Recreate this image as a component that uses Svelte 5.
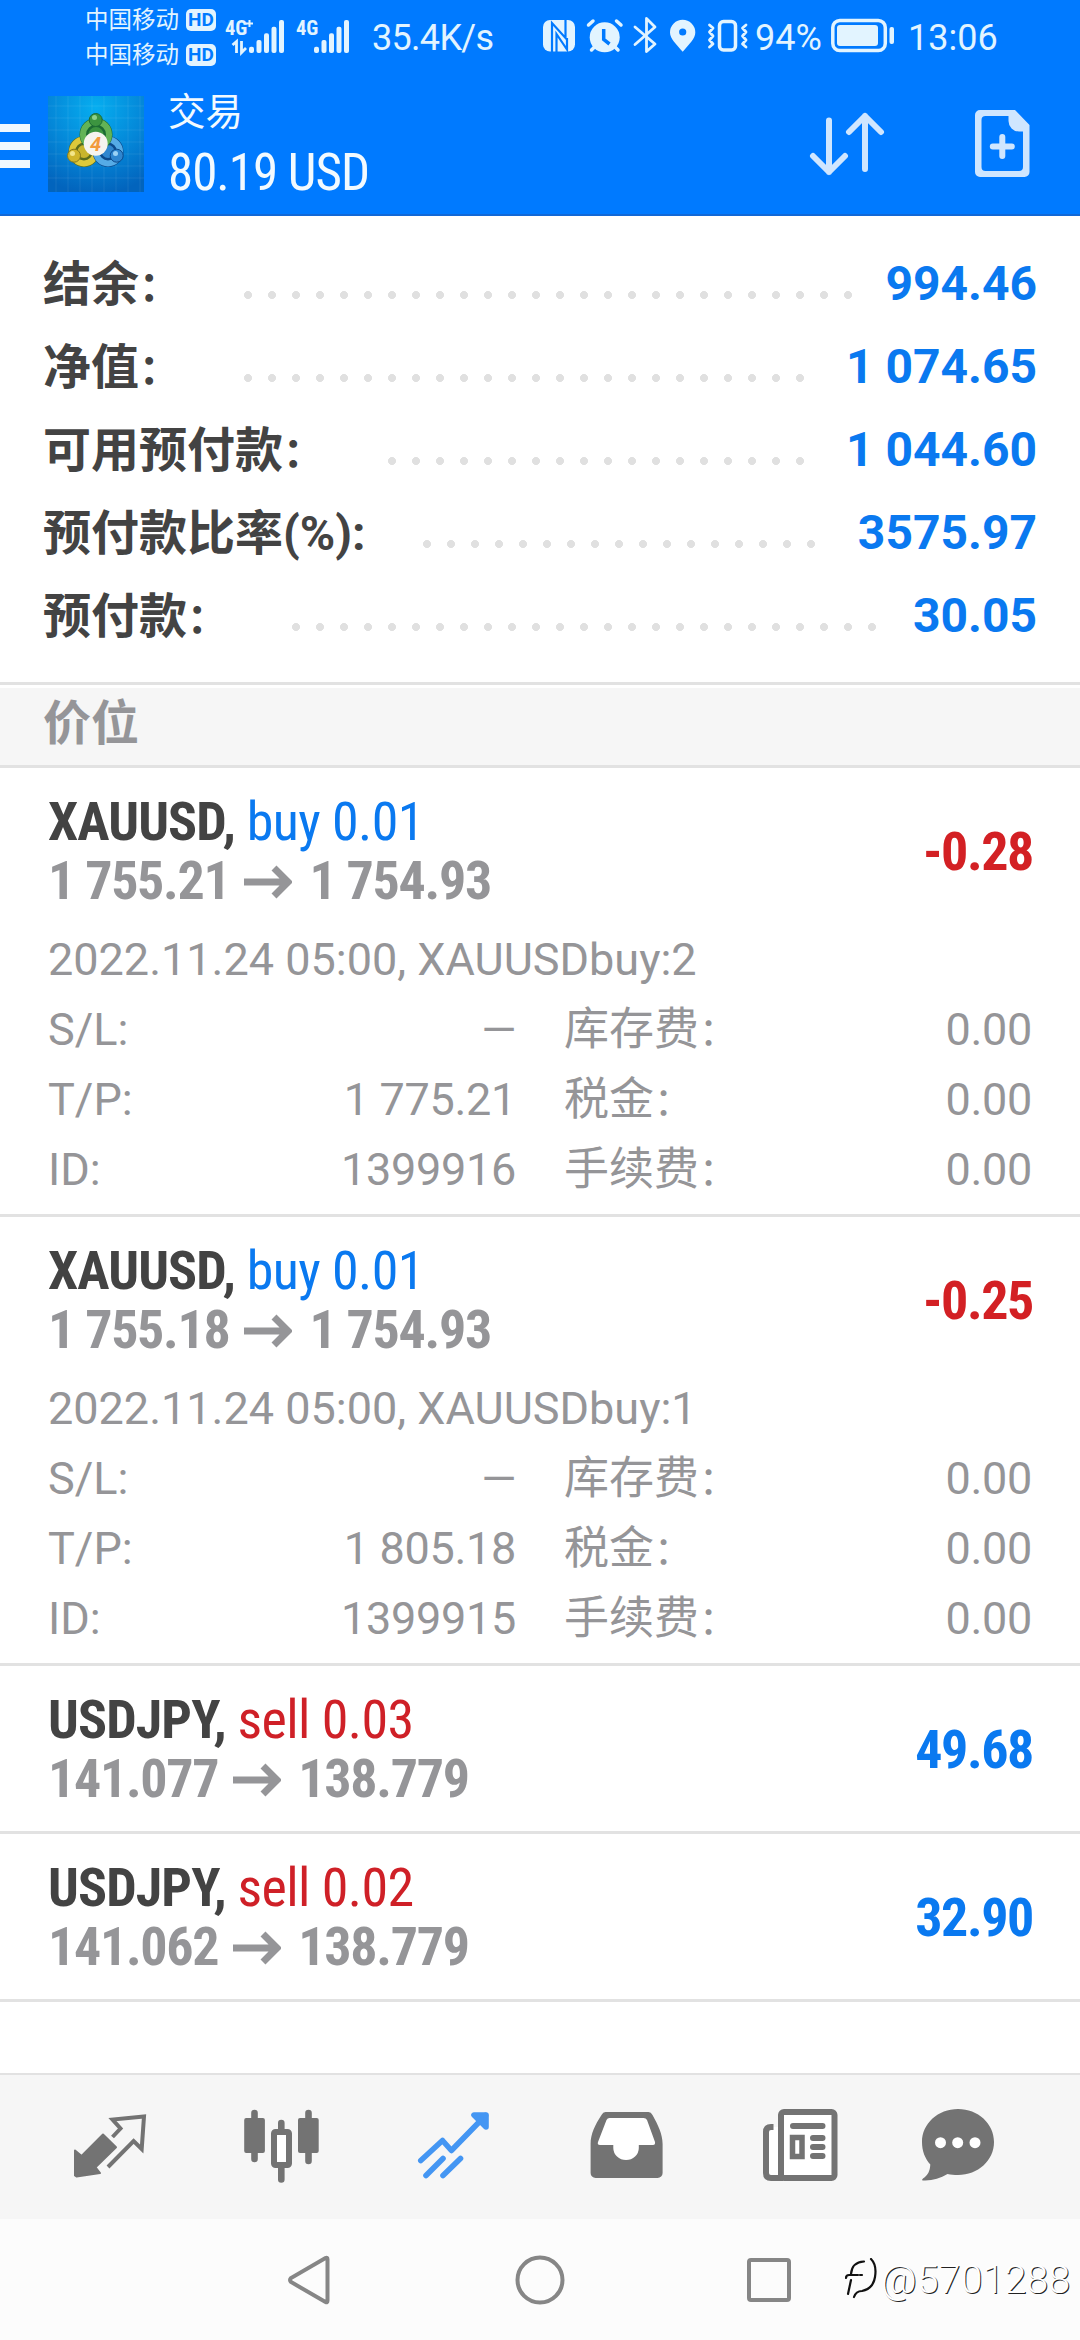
<script>
  const title = "交易"
  const floating = "80.19 USD"

  // dots: how many leader dots are between the label and the value
  const summary = [
    { label: "结余：", value: "994.46", dots: 26 },
    { label: "净值：", value: "1 074.65", dots: 24 },
    { label: "可用预付款：", value: "1 044.60", dots: 18 },
    { label: "预付款比率(%):", value: "3575.97", dots: 17 },
    { label: "预付款：", value: "30.05", dots: 25 },
  ]

  const positions = [
    {
      symbol: "XAUUSD",
      side: "buy",
      volume: "0.01",
      open: "1 755.21",
      price: "1 754.93",
      profit: "-0.28",
      details: {
        comment: "2022.11.24 05:00, XAUUSDbuy:2",
        rows: [
          ["S/L:", "—", "库存费：", "0.00"],
          ["T/P:", "1 775.21", "税金：", "0.00"],
          ["ID:", "1399916", "手续费：", "0.00"],
        ],
      },
    },
    {
      symbol: "XAUUSD",
      side: "buy",
      volume: "0.01",
      open: "1 755.18",
      price: "1 754.93",
      profit: "-0.25",
      details: {
        comment: "2022.11.24 05:00, XAUUSDbuy:1",
        rows: [
          ["S/L:", "—", "库存费：", "0.00"],
          ["T/P:", "1 805.18", "税金：", "0.00"],
          ["ID:", "1399915", "手续费：", "0.00"],
        ],
      },
    },
    {
      symbol: "USDJPY",
      side: "sell",
      volume: "0.03",
      open: "141.077",
      price: "138.779",
      profit: "49.68",
    },
    {
      symbol: "USDJPY",
      side: "sell",
      volume: "0.02",
      open: "141.062",
      price: "138.779",
      profit: "32.90",
    },
  ]

  const bars = [31.7, 25, 18.3, 11.7, 5]
</script>

<!-- the full-width colon is drawn smaller, so that it sits closer to the text -->
{#snippet caption(text)}
  {#if text.endsWith("：")}
    <span>{text.slice(0, -1)}<span class="colon">：</span></span>
  {:else}
    <span>{text}</span>
  {/if}
{/snippet}

<div class="screen">
  <header>
    <div class="status">
      <div class="carriers">
        <div>中国移动<span class="hd">HD</span></div>
        <div>中国移动<span class="hd">HD</span></div>
      </div>
      <svg class="signal" width="128" height="42" viewBox="0 0 128 42">
        <text x="2" y="20">4G</text>
        <path d="M26.5 5v7M23 8.5h7" stroke="currentColor" stroke-width="2" />
        <path d="M9.5 30l4-3.500v11.500M18.500 26v11.500l4.500-4.500" stroke="currentColor" stroke-width="2.800" fill="none" />
        <text x="73" y="20">4G</text>
        {#each bars as top, i}
          <rect x={26 + i * 7.5} y={top} width="5" height={38 - top} rx="2" />
          <rect x={91 + i * 7.5} y={top} width="5" height={38 - top} rx="2" />
        {/each}
      </svg>
      <span class="speed">35.4K/s</span>
      <svg class="indicators" width="210" height="42" viewBox="0 0 210 42">
        <!-- nfc -->
        <rect x="2" y="5" width="32" height="31.500" rx="7" />
        <path class="cut" d="M11 37V8L24.500 23V4.500M15.500 37V19L26 34.500V23" stroke-width="2.200" />
        <!-- alarm -->
        <circle cx="63.700" cy="22.300" r="15" />
        <path class="line" d="M47.500 10l4.500-4M75.500 6l4.500 4M50.500 35l3-3M77 35l-3-3" />
        <path class="cut" d="M62.700 14v10.500l5.800 4.500" stroke-width="3.500" />
        <!-- bluetooth -->
        <path class="line thin" d="M94 12l20 17-8.500 7.500v-33L114 12 94 29.500" />
        <!-- location -->
        <path d="M141.700 36.700C135 29 129 23.500 129 17.500a12.650 12.650 0 1 1 25.300 0c0 6-5.900 11.500-12.600 19.200z" />
        <circle cx="141.700" cy="17" r="3.600" fill="#007aff" />
        <!-- vibration -->
        <rect class="line" x="178.500" y="6.500" width="16" height="28.500" rx="4" />
        <path class="line thin" d="M168.500 10l3.500 3-3.500 4 3.500 4-3.500 4 3.500 4-3.500 3M205 10l-3.500 3 3.500 4-3.500 4 3.500 4-3.500 4 3.500 3" />
      </svg>
      <span class="charge">94%</span>
      <svg class="battery" width="64" height="36" viewBox="0 0 64 36">
        <rect class="line" x="1.800" y="2.500" width="52.500" height="30" rx="7" />
        <rect x="6" y="7" width="41" height="21" rx="3" />
        <rect x="58.500" y="9" width="4.500" height="17" rx="2" />
      </svg>
      <span class="clock">13:06</span>
    </div>

    <div class="app-bar">
      <button type="button" class="menu" aria-label="menu">
        <span></span><span></span><span></span>
      </button>
      <svg class="logo" width="96" height="96" viewBox="0 0 96 96">
        <defs>
          <radialGradient id="sky" cx="50%" cy="12%" r="90%">
            <stop offset="0" stop-color="#06aef0" />
            <stop offset="0.55" stop-color="#0487d8" />
            <stop offset="1" stop-color="#0264bd" />
          </radialGradient>
        </defs>
        <rect width="96" height="96" fill="url(#sky)" />
        <path
          d="M8 0v96M20 0v96M32 0v96M44 0v96M56 0v96M68 0v96M80 0v96M92 0v96M0 10h96M0 22h96M0 34h96M0 46h96M0 58h96M0 70h96M0 82h96"
          stroke="#fff"
          stroke-opacity="0.08"
        />
        <!-- three linked people: yellow, blue and green -->
        <circle cx="36" cy="55.500" r="11" fill="#c9b52c" stroke="#5b6d1d" stroke-width="9" />
        <circle cx="36" cy="55.500" r="12" fill="none" stroke="#dcc93b" stroke-width="6" />
        <circle cx="60" cy="55.500" r="11" fill="#2f86cf" stroke="#0c4a8c" stroke-width="9" />
        <circle cx="60" cy="55.500" r="12" fill="none" stroke="#55abe6" stroke-width="6" />
        <circle cx="48" cy="38.500" r="12" fill="#3c9440" stroke="#1c6b33" stroke-width="9" />
        <circle cx="48" cy="38.500" r="13" fill="none" stroke="#63b356" stroke-width="6" />
        <circle cx="47.700" cy="24" r="6.500" fill="#3c9440" stroke="#1c6b33" />
        <circle cx="26" cy="59.700" r="6.500" fill="#d0b52a" stroke="#84791c" />
        <circle cx="68.700" cy="59.700" r="6.500" fill="#2f86cf" stroke="#0c4a8c" />
        <circle cx="46.500" cy="21.500" r="2.500" fill="#8fd08a" />
        <circle cx="24.500" cy="57.500" r="2.500" fill="#f3e68a" />
        <circle cx="67.500" cy="57.500" r="2.500" fill="#9bd2f5" />
        <circle cx="47.700" cy="47.700" r="12" fill="#f6f4ef" />
        <text class="four" x="47.500" y="54.500">4</text>
      </svg>
      <div class="heading">
        <div class="title">{title}</div>
        <div class="floating">{floating}</div>
      </div>
      <svg class="sort" width="76" height="66" viewBox="0 0 76 66">
        <path d="M20 9.500V61M4 45l16 16 16-16M56 58V5M40 21L56 5l16 16" />
      </svg>
      <svg class="new-order" width="55" height="68" viewBox="0 0 55 68">
        <path
          fill-rule="evenodd"
          d="M5 0H40L54.500 15V62a5 5 0 0 1-5 5H5a5 5 0 0 1-5-5V5a5 5 0 0 1 5-5zM10.500 6a4 4 0 0 0-4 4V57a4 4 0 0 0 4 4H44a4 4 0 0 0 4-4V21.500H44A10.500 10.500 0 0 1 33.500 11V6z"
        />
        <path d="M27.300 27v19M17.800 36.500h19" stroke="#cfe6ff" stroke-width="6" stroke-linecap="round" />
      </svg>
    </div>
  </header>

  <section class="summary">
    {#each summary as row}
      <div class="summary-row">
        <div class="label">{@render caption(row.label)}</div>
        <div class="dots" style="width: {row.dots * 24}px"></div>
        <div class="value">{row.value}</div>
      </div>
    {/each}
  </section>

  <h2>价位</h2>

  <main>
    {#each positions as position}
      <article>
        <div class="head">
          <div>
            <div class="name">
              <b>{position.symbol},</b>
              <span class={position.side}>{position.side} {position.volume}</span>
            </div>
            <div class="prices">
              {position.open}
              <svg width="48" height="34" viewBox="0 0 48 34">
                <path d="M0 17H44M30 3l14 14-14 14" />
              </svg>
              {position.price}
            </div>
          </div>
          <div class="profit" class:loss={position.profit.startsWith("-")}>{position.profit}</div>
        </div>
        {#if position.details}
          <div class="details">
            <p>{position.details.comment}</p>
            {#each position.details.rows as [left, leftValue, right, rightValue]}
              <div class="detail-row">
                <div>{@render caption(left)}<span class="number">{leftValue}</span></div>
                <div>{@render caption(right)}<span class="number">{rightValue}</span></div>
              </div>
            {/each}
          </div>
        {/if}
      </article>
    {/each}
  </main>

  <nav class="tabs">
    <svg width="172" height="144" viewBox="0 0 172 144">
      <g transform="translate(50 39)">
        <path
          d="M1 36.500L7.600 42 29 20.500 42 33.300 21.500 53.300 26 59 2.500 62.500 1 61.500z"
          fill="currentColor"
          stroke-width="2"
          stroke-linejoin="round"
        />
        <path d="M38.500 23L46.500 14.500 38.500 5.500 70 2.500 67.700 35 59.600 27 34 53" stroke-width="4" />
      </g>
    </svg>
    <svg width="172" height="144" viewBox="0 0 172 144">
      <g transform="translate(48 34)" stroke-linecap="round">
        <path d="M10.500 4v46M64.500 4v48M37.300 14v10M37.300 58v12.500" stroke-width="6.600" />
        <rect x="0.200" y="9" width="20.700" height="35" rx="2" fill="currentColor" stroke="none" />
        <rect x="54" y="9" width="20.700" height="35" rx="2" fill="currentColor" stroke="none" />
        <rect x="30" y="23" width="15" height="33" rx="1.500" fill="#fff" stroke-width="6" />
      </g>
    </svg>
    <svg class="current" width="172" height="144" viewBox="0 0 172 144">
      <g transform="translate(50 36)" stroke-linecap="round" stroke-linejoin="round" stroke-width="5.600">
        <path d="M2.800 49.500L24.500 29.500 33.400 39.500 67.500 4.500" />
        <path d="M56 4h12v12z" fill="currentColor" />
        <path d="M8 64.500L25 47.500M25 64.500L42.500 47.500" />
      </g>
    </svg>
    <svg width="172" height="144" viewBox="0 0 172 144">
      <g transform="translate(50 37)" stroke="none">
        <path
          fill="currentColor"
          d="M15.500 0H58.500Q61 0 62.500 3C68 13 72.600 22 72.600 32V61a5 5 0 0 1-5 5H5.600a5 5 0 0 1-5-5V32C0.600 22 5 13 11.500 3Q13 0 15.500 0z"
        />
        <path
          fill="#fff"
          d="M19.500 6H53.500Q56 6 57 8L65 30Q65.500 33 63 33H48.800V36a12.700 12 0 0 1-25.500 0V33H10Q7 33 8 30L16.500 8Q17.500 6 19.500 6z"
        />
      </g>
    </svg>
    <svg width="172" height="144" viewBox="0 0 172 144">
      <g transform="translate(51 34)">
        <rect x="5" y="18" width="13" height="50" fill="#fff" stroke="none" />
        <path d="M10.500 18H8Q3 18 3 23V64Q3 69 8 69H20" stroke-width="6" />
        <rect x="18" y="3" width="53.500" height="66" rx="3" fill="#fff" stroke-width="6" />
        <path d="M30 17H59.500M50 29h9.500M50 38h9.500M50 47h9.500" stroke-width="6" stroke-linecap="round" />
        <rect x="29.500" y="28.500" width="9.500" height="19" stroke-width="5.500" />
      </g>
    </svg>
    <svg width="172" height="144" viewBox="0 0 172 144">
      <g transform="translate(38 34)" stroke="none">
        <path
          fill="currentColor"
          d="M36 0C56 0 72 14.500 72 33S56 66 36 66C32 66 29 65.800 25.500 65 18 69.500 10 72 1 71.500 -0.500 71.500 0 70.500 1 69.500 6 66 8 62 8.300 55.500 3 49.500 0 42 0 33 0 14.500 16 0 36 0z"
        />
        <circle cx="18.500" cy="33.700" r="5.500" fill="#fff" />
        <circle cx="35.700" cy="33.700" r="5.500" fill="#fff" />
        <circle cx="53" cy="33.700" r="5.500" fill="#fff" />
      </g>
    </svg>
  </nav>

  <footer>
    <svg width="46" height="52" viewBox="0 0 46 52">
      <path d="M41.500 5.500V46.500Q41.500 49 39.500 48L5 28Q3 26 5 24L39.500 4Q41.500 3 41.500 5.500z" />
    </svg>
    <svg width="50" height="50" viewBox="0 0 50 50"><circle cx="25" cy="25" r="22.500" /></svg>
    <svg width="46" height="46" viewBox="0 0 46 46"><rect x="3" y="3" width="40" height="40" rx="2" /></svg>
    <div class="watermark">
      <svg width="36" height="44" viewBox="0 0 36 44">
        <path d="M1 20q0-3 3-3h9M6 16q1-12 13-12.500M6 22l-3 14M15 17h2" />
        <path d="M26 1q6 6 4 18T17 33q-6 0-8 6" />
      </svg>
      <span>@5701288</span>
    </div>
  </footer>
</div>

<style>
  :global(body) {
    background: #fff;
  }

  .screen {
    width: 1080px;
    height: 2340px;
    display: flex;
    flex-direction: column;
    overflow: hidden;
    font-family: Roboto, "Noto Sans CJK SC", sans-serif;
    background: #fff;
  }

  .colon {
    margin-right: 0.176em;
    font-size: 0.85em;
    line-height: 1;
  }

  header {
    height: 216px;
    box-sizing: border-box;
    border-bottom: 2px solid #1268d6;
    background: #007aff;
    color: #e2f4ff;
  }

  .status {
    display: flex;
    align-items: center;
    height: 72px;
    padding-left: 85px;
    font-size: 36px;
    line-height: 72px;
    white-space: nowrap;
  }

  .status svg {
    flex: none;
    fill: currentColor;
  }

  .status .line {
    fill: none;
    stroke: currentColor;
    stroke-width: 3.5;
    stroke-linecap: round;
    stroke-linejoin: round;
  }

  .status .thin {
    stroke-width: 2.8;
  }

  .status .cut {
    fill: none;
    stroke: #007aff;
  }

  .carriers {
    width: 138px;
    margin-top: 3px;
    font-size: 23.5px;
    line-height: 35px;
  }

  .carriers div {
    display: flex;
    align-items: center;
    gap: 7px;
  }

  .hd {
    width: 30px;
    height: 22px;
    border-radius: 5px;
    background: #e2f4ff;
    color: #007aff;
    font-size: 19px;
    font-weight: 700;
    line-height: 22px;
    text-align: center;
  }

  .signal {
    margin: -1px 3px 0 0;
  }

  .signal text {
    font: 700 20.5px "Roboto Condensed", sans-serif;
  }

  .speed {
    width: 169px;
    margin: 4px 0 0 18px;
    letter-spacing: -0.7px;
  }

  .charge {
    width: 76px;
    margin-top: 4px;
    padding-left: 4px;
  }

  .clock {
    margin: 4px 0 0 13px;
  }

  .app-bar {
    display: flex;
    align-items: center;
    height: 144px;
  }

  .menu {
    display: flex;
    flex-direction: column;
    gap: 10px;
    width: 30px;
    margin: 4px 18px 0 0;
    padding: 0;
    border: none;
    background: none;
  }

  .menu span {
    height: 8px;
    background: #f0f8ff;
  }

  .four {
    font: italic 700 20px Roboto, sans-serif;
    fill: #f29a3c;
    text-anchor: middle;
  }

  .heading {
    flex: 1;
    margin: -3px 0 0 24px;
    color: #f2faff;
  }

  .title {
    font-size: 37.5px;
    line-height: 63px;
  }

  .floating {
    margin-top: -2px;
    font-family: "Roboto Condensed", sans-serif;
    font-size: 51px;
    line-height: 62px;
    letter-spacing: -1px;
  }

  .sort {
    margin-right: 90px;
    fill: none;
    stroke: #cfe6ff;
    stroke-width: 6;
    stroke-linecap: round;
    stroke-linejoin: round;
  }

  .new-order {
    margin-right: 50px;
    fill: #cfe6ff;
  }

  .summary {
    padding: 26px 43px 25px;
    border-bottom: 3px solid #e2e2e2;
    font-size: 48px;
    font-weight: 700;
    line-height: 83px;
    color: #434343;
  }

  .summary-row {
    display: flex;
    align-items: center;
    height: 83px;
    white-space: nowrap;
  }

  .label {
    padding-top: 2px;
  }

  .dots {
    height: 8px;
    margin: 23px auto 0 49px;
    background: radial-gradient(circle, #e0e0e0 3.7px, transparent 4.3px) 0 0 / 24px 8px;
  }

  .value {
    color: #0a79f0;
  }

  h2 {
    height: 80px;
    box-sizing: border-box;
    margin: 3px 0 0;
    padding-left: 43px;
    border-bottom: 3px solid #e2e2e2;
    background: #f6f6f6;
    font-size: 48px;
    font-weight: 700;
    line-height: 71px;
    color: #959598;
  }

  main {
    flex: 1;
  }

  article {
    padding: 24px 48px 23px;
    border-bottom: 3px solid #e2e2e2;
  }

  article:has(.details) {
    padding-bottom: 9px;
  }

  .head {
    display: flex;
    align-items: center;
    justify-content: space-between;
    font-family: "Roboto Condensed", sans-serif;
    font-size: 54px;
    line-height: 59px;
  }

  .name {
    letter-spacing: -0.6px;
    color: #434343;
  }

  .name b {
    letter-spacing: -0.9px;
  }

  .buy {
    color: #0a79f0;
  }

  .sell {
    color: #cf2027;
  }

  .prices {
    display: flex;
    align-items: center;
    font-weight: 700;
    letter-spacing: -1.3px;
    color: #959598;
  }

  .prices svg {
    margin: 2px 17px 0 15px;
    fill: none;
    stroke: currentColor;
    stroke-width: 7;
  }

  .profit {
    margin-right: -1px;
    font-weight: 700;
    letter-spacing: -1.4px;
    color: #0a79f0;
  }

  .profit.loss {
    color: #d32024;
  }

  .details {
    padding-top: 15px;
    font-size: 45px;
    line-height: 70px;
    color: #959598;
  }

  .details p {
    margin: 0;
  }

  .detail-row {
    display: grid;
    grid-template-columns: 468px 468px;
    gap: 48px;
    height: 70px;
  }

  .detail-row div {
    display: flex;
    justify-content: space-between;
  }

  .number {
    letter-spacing: -0.3px;
  }

  .tabs {
    display: flex;
    height: 144px;
    padding-left: 24px;
    border-top: 2px solid #e2e2e2;
    background: #f6f6f6;
    color: #737373;
  }

  .tabs svg {
    flex: none;
    fill: none;
    stroke: currentColor;
  }

  .tabs .current {
    color: #4496f3;
  }

  footer {
    display: flex;
    align-items: center;
    height: 121px;
    padding-left: 286px;
    background: #fcfcfc;
  }

  footer > svg {
    flex: none;
    margin-right: 181px;
    fill: none;
    stroke: #868686;
    stroke-width: 4;
  }

  footer > svg:nth-child(1) {
    margin-right: 183px;
  }

  footer > svg:nth-child(3) {
    margin-right: 53px;
  }

  .watermark {
    display: flex;
    align-items: center;
    font-size: 39px;
    font-weight: 300;
    line-height: 44px;
    letter-spacing: 0.3px;
    color: #fff;
    text-shadow: 1px 1px 0 #222;
  }

  .watermark svg {
    fill: none;
    stroke: #111;
    stroke-width: 2.2;
    stroke-linecap: round;
  }
</style>
